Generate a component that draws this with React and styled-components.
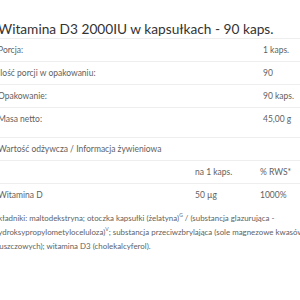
import React from 'react'
import styled, { createGlobalStyle } from 'styled-components'

const GlobalStyle = createGlobalStyle`
  html, body {
    margin: 0;
    padding: 0;
    background: #fff;
    overflow: hidden;
  }
  body {
    font-family: "Lato", "Open Sans", sans-serif;
  }
`

const Page = styled.div`
  width: 304px;
  margin-left: -2px;
  padding-top: 20px;
`

const Title = styled.h2`
  margin: 0;
  height: 18px;
  line-height: 18px;
  font-size: 13.7px;
  font-weight: 400;
  color: #333;
  white-space: nowrap;
`

const Table = styled.div`
  display: grid;
  grid-template-columns: ${(p) => p.$cols};
  margin-top: ${(p) => p.$top || 0}px;
`

const Cell = styled.div`
  height: 23px;
  line-height: 23px;
  font-size: 8.5px;
  color: #5f5f5f;
  white-space: nowrap;
  border-top: 1px solid #eee;
  box-sizing: border-box;
`

const Ingredients = styled.p`
  width: 335px;
  margin: 5px 0 0 -4px;
  font-size: 7.9px;
  line-height: 14px;
  color: #5f5f5f;

  sup {
    font-size: 5px;
    line-height: 0;
  }
`

const info = [
  ['Porcja:', '1 kaps.'],
  ['Ilość porcji w opakowaniu:', '90'],
  ['Opakowanie:', '90 kaps.'],
  ['Masa netto:', '45,00 g'],
]

const nutrition = [
  ['', 'na 1 kaps.', '% RWS*'],
  ['Witamina D', '50 µg', '1000%'],
]

export default function App() {
  return (
    <>
      <GlobalStyle />
      <Page>
        <Title>Witamina D3 2000IU w kapsułkach - 90 kaps.</Title>
        <Table $cols="265px 1fr">
          {info.map(([label, value]) => (
            <React.Fragment key={label}>
              <Cell>{label}</Cell>
              <Cell>{value}</Cell>
            </React.Fragment>
          ))}
        </Table>
        <Table $cols="1fr" $top={7}>
          <Cell>Wartość odżywcza / Informacja żywieniowa</Cell>
        </Table>
        <Table $cols="197px 65px 1fr">
          {nutrition.map((row, i) =>
            row.map((c, j) => <Cell key={`${i}-${j}`}>{c}</Cell>)
          )}
        </Table>
        <Ingredients>
          Składniki: maltodekstryna; otoczka kapsułki (żelatyna)<sup>G</sup> / (substancja glazurująca -
          hydroksypropylometyloceluloza)<sup>V</sup>; substancja przeciwzbrylająca (sole magnezowe kwasów
          tłuszczowych); witamina D3 (cholekalcyferol).
        </Ingredients>
      </Page>
    </>
  )
}
